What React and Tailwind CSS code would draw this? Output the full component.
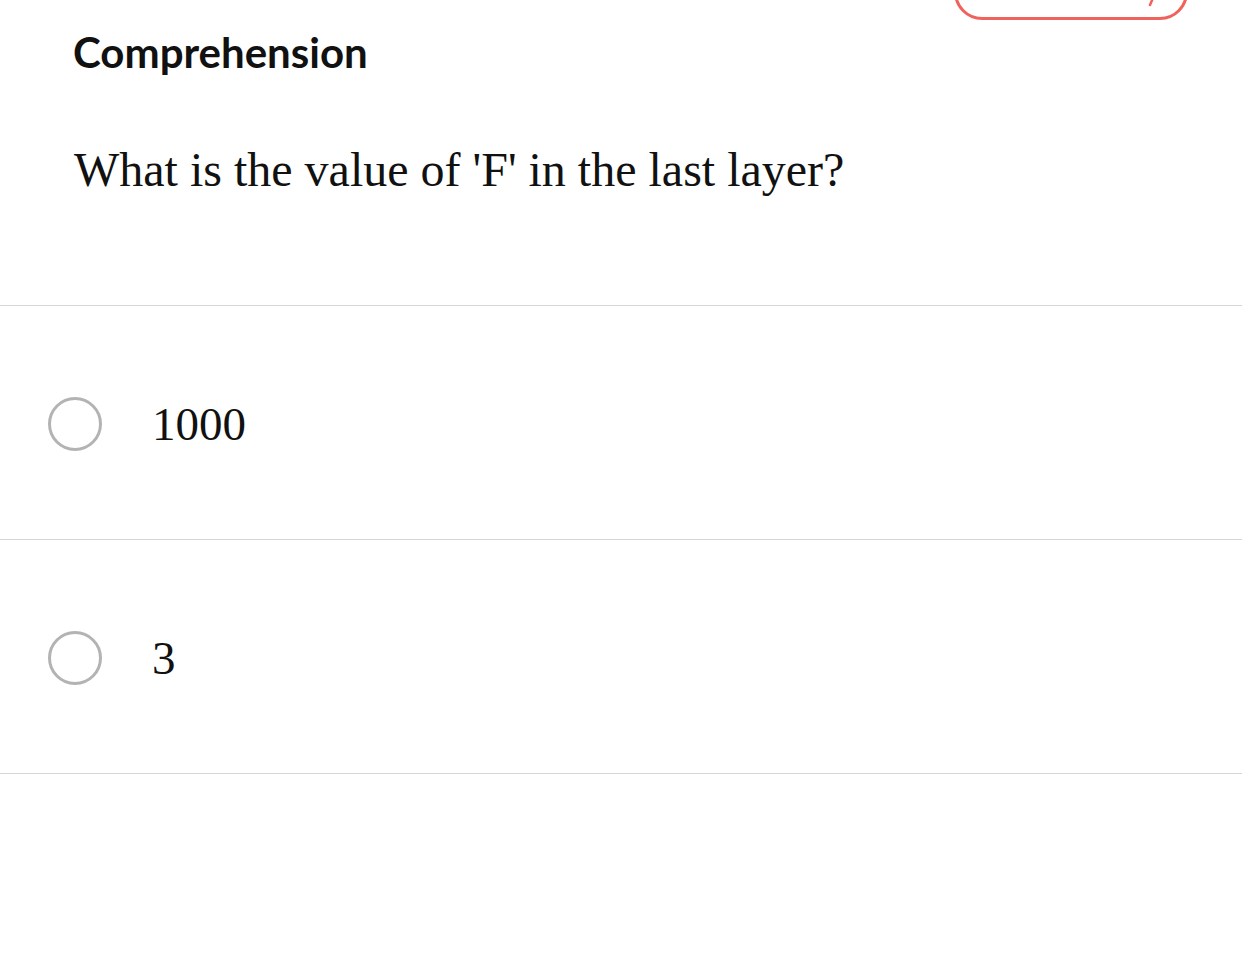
import React, { useState } from 'react';

const options = ['1000', '3'];

const App = () => {
    const [picked, setPicked] = useState(null);

    return (
        <div className="min-h-screen w-full bg-white overflow-hidden">
            <div className="flex items-start justify-between pl-[73px] pr-[54px]">
                <h1 className="mt-[28px] text-[42px] font-bold text-[#111] leading-[48px]" style={{ fontFamily: 'Lato, sans-serif' }}>
                    Comprehension
                </h1>
                <button className="-mt-[40px] h-[60px] w-[234px] rounded-[28px] border-[3px] border-[#f0635d] bg-white flex items-end justify-end pr-[26px] pb-[10px]">
                    <svg width="12" height="16" viewBox="0 0 12 16" fill="none">
                        <path d="M9 0 L3 14" stroke="#f0635d" strokeWidth="2.5" strokeLinecap="round" />
                    </svg>
                </button>
            </div>

            <p className="pl-[74px] mt-[64px] text-[48px] leading-[60px] text-[#111]" style={{ fontFamily: '"Liberation Serif", serif' }}>
                What is the value of 'F' in the last layer?
            </p>

            <div className="mt-[105px] border-t border-[#d6d6d6]">
                {options.map((opt, i) => (
                    <label
                        key={i}
                        onClick={() => setPicked(i)}
                        className="flex h-[234px] items-center border-b border-[#d6d6d6] pl-[48px] pt-[3px] cursor-pointer"
                    >
                        <span className="h-[54px] w-[54px] rounded-full border-[3px] border-[#b3b3b3] flex items-center justify-center">
                            {picked === i && <span className="h-[28px] w-[28px] rounded-full bg-[#f0635d]" />}
                        </span>
                        <span className="ml-[50px] text-[47px] text-[#111]" style={{ fontFamily: '"Liberation Serif", serif' }}>
                            {opt}
                        </span>
                    </label>
                ))}
            </div>
        </div>
    );
};

export default App;
